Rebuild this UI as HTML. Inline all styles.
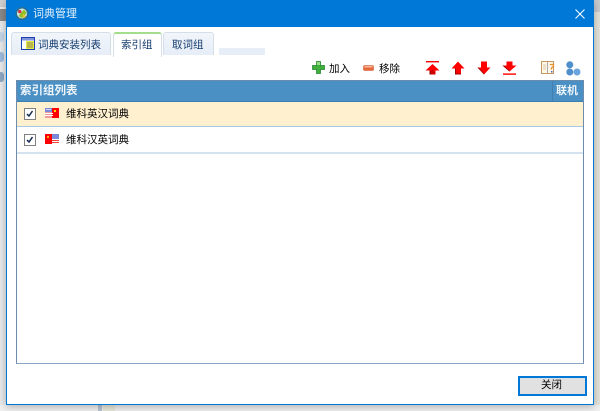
<!DOCTYPE html>
<html><head><meta charset="utf-8">
<style>
html,body{margin:0;padding:0;width:600px;height:411px;overflow:hidden;background:#f2f2f2;font-family:"Liberation Sans","Noto Sans CJK SC",sans-serif;}
.a{position:absolute;white-space:nowrap;}
svg{position:absolute;overflow:visible;}
.t{font-size:10.5px;line-height:14px;color:#000;}
</style></head><body>
<!-- background behind window -->
<div class="a" style="left:0;top:0;width:6px;height:411px;background:#e8eaec"></div>
<div class="a" style="left:0;top:0;width:6px;height:7px;background:#d0d0d0"></div>
<div class="a" style="left:0;top:9px;width:6px;height:12px;background:#8a8a8a"></div>
<div class="a" style="left:0;top:32px;width:4px;height:10px;background:#c5d7ea;border-radius:0 3px 3px 0"></div>
<div class="a" style="left:0;top:52px;width:4px;height:10px;background:#9dbce0;border-radius:0 3px 3px 0"></div>
<div class="a" style="left:0;top:72px;width:4px;height:10px;background:#8fa9c6;border-radius:0 3px 3px 0"></div>
<div class="a" style="left:594px;top:0;width:6px;height:411px;background:#e6e5dc"></div>
<div class="a" style="left:594px;top:0;width:6px;height:12px;background:#c9ccd0"></div>
<div class="a" style="left:0;top:405px;width:600px;height:6px;background:#efefef"></div>
<div class="a" style="left:98px;top:405px;width:4px;height:6px;background:#b8c2d0"></div>
<div class="a" style="left:103px;top:405px;width:12px;height:6px;background:#e6e6d8"></div>
<!-- window -->
<div class="a" style="left:6px;top:0;width:586px;height:403px;background:#fff;border:1px solid #0078d7;box-shadow:0 1px 8px rgba(0,0,0,.3)"></div>
<div class="a" style="left:7px;top:1px;width:586px;height:26px;background:#0078d7"></div>
<!-- title icon -->
<svg style="left:15px;top:7px" width="14" height="14" viewBox="0 0 14 14"><circle cx="7" cy="6.5" r="6.5" fill="#2d6f8f"/><circle cx="7" cy="6.5" r="5" fill="#cfe6e6"/><path d="M3.5 9L9 2.5L11.5 6L7 11Z" fill="#8fbf20"/><circle cx="4.8" cy="4.6" r="1.7" fill="#d8303a"/><path d="M7.5 6.5l3.5 3-3 1.5z" fill="#e8c020"/></svg>
<div class="a" style="left:33px;top:7px;font-size:11px;line-height:15px;color:#e8f2fb">词典管理</div>
<svg style="left:575px;top:9px" width="10" height="10" viewBox="0 0 10 10"><path d="M.5.5L9.5 9.5M9.5.5L.5 9.5" stroke="#fff" stroke-width="1" fill="none"/></svg>
<!-- tabs -->
<div class="a" style="left:11px;top:32px;width:98px;height:22px;background:linear-gradient(#f2f6fb,#e6edf7);border:1px solid #d5dfe9;border-bottom:0;border-radius:3px 3px 0 0;"></div>
<svg style="left:21px;top:37px" width="14" height="13" viewBox="0 0 14 13"><rect x=".5" y=".5" width="13" height="12" fill="#fff" stroke="#1b3fb0"/><rect x="1" y="1" width="12" height="2.5" fill="#7f93d8"/><rect x="5" y="4" width="8" height="8" fill="#e8e840"/><path d="M6 6h6M6 8h6M6 10h6" stroke="#666" stroke-width=".8"/></svg>
<div class="a t" style="left:38px;top:38px;color:#143c6e">词典安装列表</div>
<div class="a" style="left:113px;top:32px;width:47px;height:23px;background:#fff;border:1px solid #d5dfe9;border-top:2px solid #a4de8c;border-bottom:0;border-radius:3px 3px 0 0;"></div>
<div class="a t" style="left:121px;top:38px;color:#143c6e">索引组</div>
<div class="a" style="left:163px;top:32px;width:49px;height:22px;background:linear-gradient(#f2f6fb,#e6edf7);border:1px solid #d5dfe9;border-bottom:0;border-radius:3px 3px 0 0;"></div>
<div class="a t" style="left:172px;top:38px;color:#143c6e">取词组</div>
<div class="a" style="left:219px;top:48px;width:46px;height:7px;background:#e8eef7"></div>
<!-- toolbar -->
<svg style="left:312px;top:61px" width="13" height="13" viewBox="0 0 13 13"><path d="M4.5.5h4v4h4v4h-4v4h-4v-4h-4v-4h4z" fill="#3fae3a" stroke="#1f7f2a" stroke-width=".7"/><path d="M5 1h3v3H5z" fill="#9adf86"/></svg>
<div class="a t" style="left:329px;top:62px">加入</div>
<svg style="left:363px;top:65px" width="11" height="6" viewBox="0 0 11 6"><rect x=".5" y=".5" width="10" height="5" rx="1" fill="#e8683c" stroke="#c9603c" stroke-width=".6"/><rect x="1.5" y="1" width="8" height="1.5" fill="#f7b89a"/></svg>
<div class="a t" style="left:379px;top:62px">移除</div>
<!-- arrows -->
<svg style="left:425px;top:61px" width="15" height="14" viewBox="0 0 15 14"><rect x="1" y="0" width="13" height="1.4" fill="#f00"/><path d="M7.5 3L14.5 9.5H10.5V13.5H4.5V9.5H.5Z" fill="#f00"/><path d="M7.5 8.5L10 11V13.5H5V11Z" fill="#c00"/><path d="M4.5 9.5V13.5H5.5V9.5Z" fill="#800"/></svg>
<svg style="left:451px;top:61px" width="14" height="14" viewBox="0 0 14 14"><path d="M7 .5L13.5 7.5H10V13.5H4V7.5H.5Z" fill="#f00"/><path d="M4 7.5V13.5H10V12.5H5V7.5Z" fill="#900"/></svg>
<svg style="left:477px;top:61px" width="14" height="14" viewBox="0 0 14 14"><path d="M7 13.5L13.5 6.5H10V.5H4V6.5H.5Z" fill="#f00"/><path d="M2.5 7.5L7 12.3V13.5L.5 6.5H2Z" fill="#900"/></svg>
<svg style="left:502px;top:61px" width="15" height="14" viewBox="0 0 15 14"><path d="M7.5 10.5L14.5 4.5H10.5V0.5H4.5V4.5H.5Z" fill="#f00"/><path d="M3 5.5L7.5 9.5V10.5L.5 4.5H2Z" fill="#900"/><rect x="1" y="12.4" width="13" height="1.4" fill="#f00"/></svg>
<svg style="left:541px;top:61px" width="15" height="13" viewBox="0 0 15 13"><rect x=".5" y=".5" width="12" height="12" fill="#fff7e8" stroke="#c49a60"/><path d="M6.5 1v11" stroke="#aaa"/><path d="M2 4h3M2 6h3M2 8h3" stroke="#d8c8a8"/><path d="M9 3.5h3.5v2l-2 1.5v1.5" stroke="#e8902c" stroke-width="1.3" fill="none"/><rect x="10" y="10" width="1.5" height="1.5" fill="#3a6fc0"/></svg>
<svg style="left:566px;top:61px" width="15" height="15" viewBox="0 0 15 15"><circle cx="3.8" cy="3.8" r="3.5" fill="#4f8fcc"/><circle cx="3.8" cy="11" r="3.5" fill="#4f8fcc"/><circle cx="11" cy="11" r="3.5" fill="#6aa5de"/></svg>
<!-- table -->
<div class="a" style="left:16px;top:80px;width:566px;height:282px;border:1px solid #6d8cab;border-bottom:1px solid #8aa5c2;background:#fff"></div>
<div class="a" style="left:17px;top:81px;width:566px;height:20px;background:#4a90c4;border-bottom:1px solid #3e7fb0"></div>
<div class="a" style="left:552px;top:81px;width:1px;height:20px;background:#437fb0"></div>
<div class="a" style="left:20px;top:84px;font-size:11.5px;font-weight:bold;line-height:14px;color:#eef5fb">索引组列表</div>
<div class="a" style="left:556px;top:84px;font-size:11px;font-weight:bold;line-height:14px;color:#eef5fb">联机</div>
<div class="a" style="left:17px;top:102px;width:566px;height:24px;background:#fff0d0;border-bottom:1px solid #a9c8e6"></div>
<div class="a" style="left:17px;top:127px;width:566px;height:25px;background:#fff;border-bottom:2px solid #d5e3f1;"></div>
<!-- row 1 -->
<div class="a" style="left:24px;top:108px;width:10px;height:10px;background:#fff;border:1px solid #808080"></div>
<svg style="left:25px;top:109px" width="10" height="10" viewBox="0 0 10 10"><path d="M2 5L4 7L7.5 2" stroke="#10284c" stroke-width="1.5" fill="none"/></svg>
<svg style="left:45px;top:108px" width="14" height="10" viewBox="0 0 14 10"><rect width="14" height="10" fill="#f00"/><rect x="0" y="0" width="7" height="10" fill="#f59a9a"/><rect x="0" y="0" width="7" height="4" fill="#7c88d8"/><path d="M0 5.5h8M0 7.5h8" stroke="#fff"/><path d="M1 1.5h5" stroke="#d0d4f0"/><rect x="9" y="2" width="2" height="2" fill="#ffd800"/></svg>
<div class="a t" style="left:66px;top:107px">维科英汉词典</div>
<!-- row 2 -->
<div class="a" style="left:24px;top:134px;width:10px;height:10px;background:#fff;border:1px solid #808080"></div>
<svg style="left:25px;top:135px" width="10" height="10" viewBox="0 0 10 10"><path d="M2 5L4 7L7.5 2" stroke="#10284c" stroke-width="1.5" fill="none"/></svg>
<svg style="left:45px;top:134px" width="14" height="10" viewBox="0 0 14 10"><rect width="14" height="10" fill="#f00"/><rect x="2" y="2" width="2" height="2" fill="#ffb000"/><rect x="7" y="0" width="7" height="5" fill="#7c88d8"/><rect x="7" y="5" width="7" height="5" fill="#fff"/><path d="M7 6.5h7M7 8.5h7" stroke="#f04040"/></svg>
<div class="a t" style="left:66px;top:133px">维科汉英词典</div>
<!-- button -->
<div class="a" style="left:518px;top:376px;width:65px;height:16px;background:#e1e1e1;border:2px solid #0078d7"></div>
<div class="a t" style="left:541px;top:378px">关闭</div>
</body></html>
